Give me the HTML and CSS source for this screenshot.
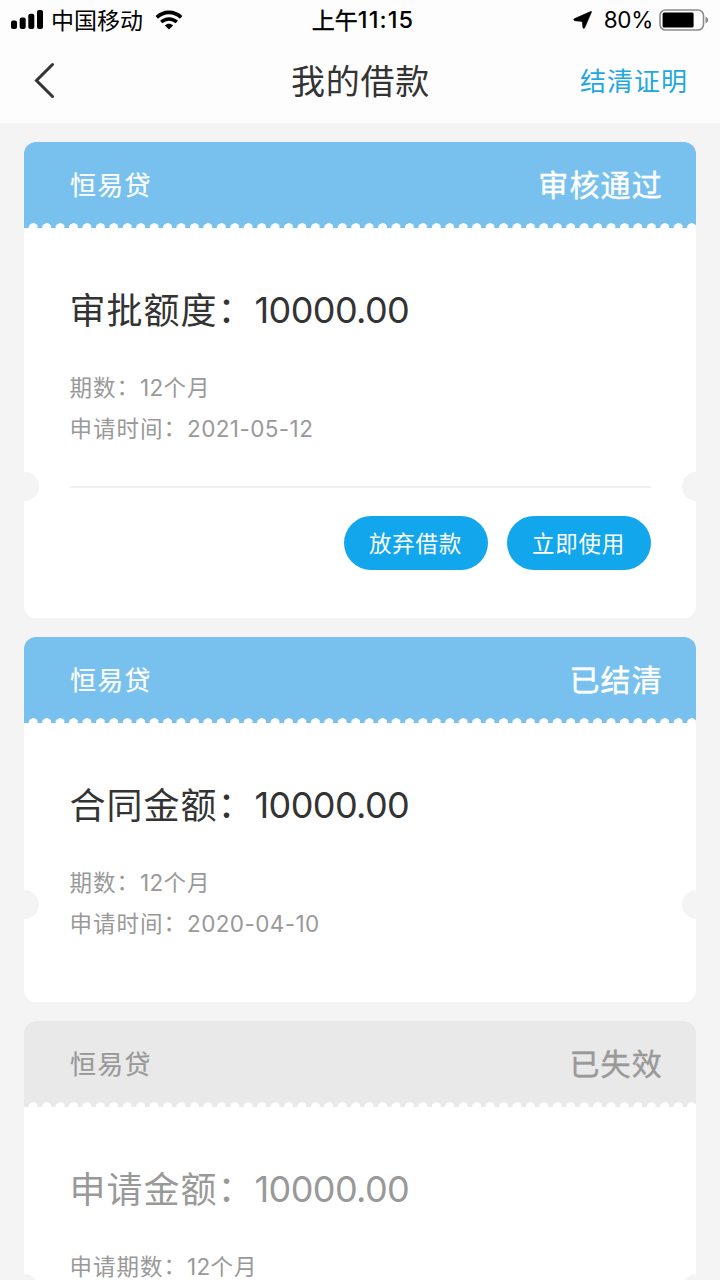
FILE: index.html
```html
<!DOCTYPE html>
<html lang="zh-CN">
<head>
    <meta charset="UTF-8">
    <meta name="viewport" content="width=device-width, initial-scale=1.0">
    <title>我的借款</title>
    <link rel="stylesheet" href="styles.css">
</head>
<body>
    <header class="top">
        <div class="status-bar">
            <div class="status-left">
                <svg class="signal" width="33" height="20" viewBox="0 0 33 20">
                    <rect x="0" y="10.5" width="6" height="8.5" rx="2"/>
                    <rect x="8.7" y="7.5" width="6" height="11.5" rx="2"/>
                    <rect x="17.3" y="3.8" width="6" height="15.2" rx="2"/>
                    <rect x="26" y="0" width="6" height="19" rx="2"/>
                </svg>
                <span class="carrier">中国移动</span>
                <svg class="wifi" width="28" height="20" viewBox="0 0 28 20">
                    <path d="M1.8 7.4C8.8 0.7 19.2 0.7 26.2 7.4" fill="none" stroke="#000" stroke-width="3.6"/>
                    <path d="M6.2 12C10.8 7.9 17.2 7.9 21.8 12" fill="none" stroke="#000" stroke-width="3.4"/>
                    <path d="M9.9 15.6C12.3 13.2 15.7 13.2 18.1 15.6L14 19.4Z"/>
                </svg>
            </div>
            <div class="clock"><span class="clock-text">上午</span><span class="clock-num">11:15</span></div>
            <div class="status-right">
                <svg width="19" height="18" viewBox="0 0 19 18">
                    <path d="M17.6 0.6Q18.9 0 18.4 1.3L11.8 16.6Q10.8 18.4 9.9 16.6L9.2 10.4L1.6 9.7Q-0.1 8.9 1.6 7.6Z" stroke="#000" stroke-width="0.6"/>
                </svg>
                <span class="percent">80%</span>
                <svg class="battery" width="52" height="22" viewBox="0 0 52 22">
                    <rect x="2" y="1" width="43.5" height="20" rx="5.5" fill="#fff" stroke="#8c8c8c" stroke-width="1.6"/>
                    <rect x="4.6" y="3.5" width="31" height="15" rx="1.5"/>
                    <path d="M47.5 7.5Q50.3 8.5 50.3 11T47.5 14.5Z" fill="#8c8c8c"/>
                </svg>
            </div>
        </div>
        <nav class="nav">
            <svg class="back" width="22" height="38" viewBox="0 0 22 38">
                <path d="M19.5 3.5L3.5 19.5L19.5 35.5" fill="none" stroke="#333" stroke-width="3" stroke-linecap="round"/>
            </svg>
            <h1 class="title">我的借款</h1>
            <a class="nav-link">结清证明</a>
        </nav>
    </header>

    <main class="list">
        <section class="card card-actions">
            <div class="card-head">
                <span class="product">恒易贷</span>
                <span class="state">审核通过</span>
            </div>
            <div class="card-body">
                <p class="amount">审批额度<span class="colon">：</span><span class="num">10000.00</span></p>
                <p class="info">期数<span class="colon">：</span><span class="num">12</span>个月</p>
                <p class="info">申请时间<span class="colon">：</span><span class="num date">2021-05-12</span></p>
                <div class="buttons">
                    <button class="btn">放弃借款</button>
                    <button class="btn">立即使用</button>
                </div>
            </div>
        </section>

        <section class="card">
            <div class="card-head">
                <span class="product">恒易贷</span>
                <span class="state">已结清</span>
            </div>
            <div class="card-body">
                <p class="amount">合同金额<span class="colon">：</span><span class="num">10000.00</span></p>
                <p class="info">期数<span class="colon">：</span><span class="num">12</span>个月</p>
                <p class="info">申请时间<span class="colon">：</span><span class="num date">2020-04-10</span></p>
            </div>
        </section>

        <section class="card card-invalid">
            <div class="card-head">
                <span class="product">恒易贷</span>
                <span class="state">已失效</span>
            </div>
            <div class="card-body">
                <p class="amount">申请金额<span class="colon">：</span><span class="num">10000.00</span></p>
                <p class="info">申请期数<span class="colon">：</span><span class="num">12</span>个月</p>
            </div>
        </section>
    </main>
</body>
</html>
```

FILE: styles.css
```css
* {
    box-sizing: border-box;
}

body {
    margin: 0;
    height: 1280px;
    overflow: hidden;
    background-color: #f4f4f4;
    color: #333;
    font-family: "Noto Sans CJK SC", sans-serif;
}

.top {
    height: 123px;
    background-color: #fdfdfd;
}

.status-bar {
    display: grid;
    grid-template-columns: 1fr auto 1fr;
    align-items: center;
    height: 40px;
    padding: 0 10px 0 11px;
    color: #000;
    font-size: 23px;
    line-height: 38px;
}

.status-left,
.status-right,
.clock {
    display: flex;
    align-items: center;
}

.status-right {
    justify-content: flex-end;
}

.carrier {
    margin: 0 12px 2px 7px;
}

.clock {
    padding-left: 5px;
}

.clock-text {
    margin-bottom: 2px;
    -webkit-text-stroke: 0.4px #000;
}

.clock-num,
.percent,
.num {
    font-family: Inter, "Noto Sans CJK SC", sans-serif;
}

.clock-num {
    font-size: 23.5px;
    font-weight: 500;
    letter-spacing: 1.1px;
}

.percent {
    margin: 0 5px 0 12px;
    font-size: 22.5px;
    letter-spacing: -0.3px;
}

.nav {
    display: grid;
    grid-template-columns: 1fr auto 1fr;
    align-items: center;
    height: 80px;
    padding: 0 32px 0 33px;
}

.title {
    margin: 0 0 2px;
    font-size: 34px;
    font-weight: 400;
    letter-spacing: 0.8px;
}

.nav-link {
    justify-self: end;
    margin-bottom: 1px;
    color: #23a7e0;
    font-size: 26px;
    letter-spacing: 1px;
}

.list {
    display: flex;
    flex-direction: column;
    gap: 19.5px;
    padding: 19px 24px 0;
}

.card {
    position: relative;
    flex: none;
    height: 364.5px;
    border-radius: 12px;
    background-color: #fff;
    overflow: hidden;
}

.card-actions {
    height: 475.5px;
}

/* round notches on both edges */
.card::before,
.card::after {
    content: "";
    position: absolute;
    top: 253px;
    width: 29px;
    height: 29px;
    border-radius: 50%;
    background-color: #f4f4f4;
}

.card::before {
    left: -14.5px;
}

.card::after {
    right: -14.5px;
}

.card-actions::before,
.card-actions::after {
    top: 330px;
}

/* perforated bottom edge */
.card-head {
    display: flex;
    justify-content: space-between;
    align-items: center;
    height: 86px;
    padding: 0 33px 3px 46px;
    background: radial-gradient(ellipse 5.1px 5px at 9.4px 100%, #fff 90%, transparent 100%) 0 100% / 13.44px 6px repeat-x #78c1ef;
    color: #fff;
}

.product {
    font-size: 26px;
    letter-spacing: 1.2px;
    -webkit-text-stroke: 0.2px currentColor;
}

.state {
    margin-bottom: 1px;
    font-size: 30px;
    letter-spacing: 1.2px;
    -webkit-text-stroke: 0.4px currentColor;
}

.card-body {
    padding: 52px 45.5px 0;
}

.amount {
    margin: 0 0 30px;
    font-size: 36px;
    line-height: 56px;
    letter-spacing: 1px;
}

.num {
    line-height: 1;
}

.amount .num {
    letter-spacing: -0.6px;
    vertical-align: 1px;
}

.colon {
    line-height: 1;
    vertical-align: 1px;
}

.info {
    margin: 0;
    color: #999;
    font-size: 22.5px;
    line-height: 40.5px;
    letter-spacing: 1px;
}

.info .num {
    letter-spacing: 0.3px;
}

.info .date {
    letter-spacing: 0.4px;
}

.buttons {
    display: flex;
    justify-content: flex-end;
    gap: 19px;
    margin-top: 39px;
    padding-top: 28px;
    border-top: 2px solid #f0f0f0;
}

.btn {
    width: 144px;
    height: 54px;
    padding: 0 0 2px;
    border: none;
    border-radius: 27px;
    background-color: #12a7ec;
    color: #fff;
    font-family: inherit;
    font-size: 22.5px;
    letter-spacing: 0.8px;
}

.card-invalid {
    height: 300px;
}

.card-invalid .card-head {
    background-color: #e9e9e9;
    color: #999;
}

.card-invalid .amount {
    color: #999;
}
```
